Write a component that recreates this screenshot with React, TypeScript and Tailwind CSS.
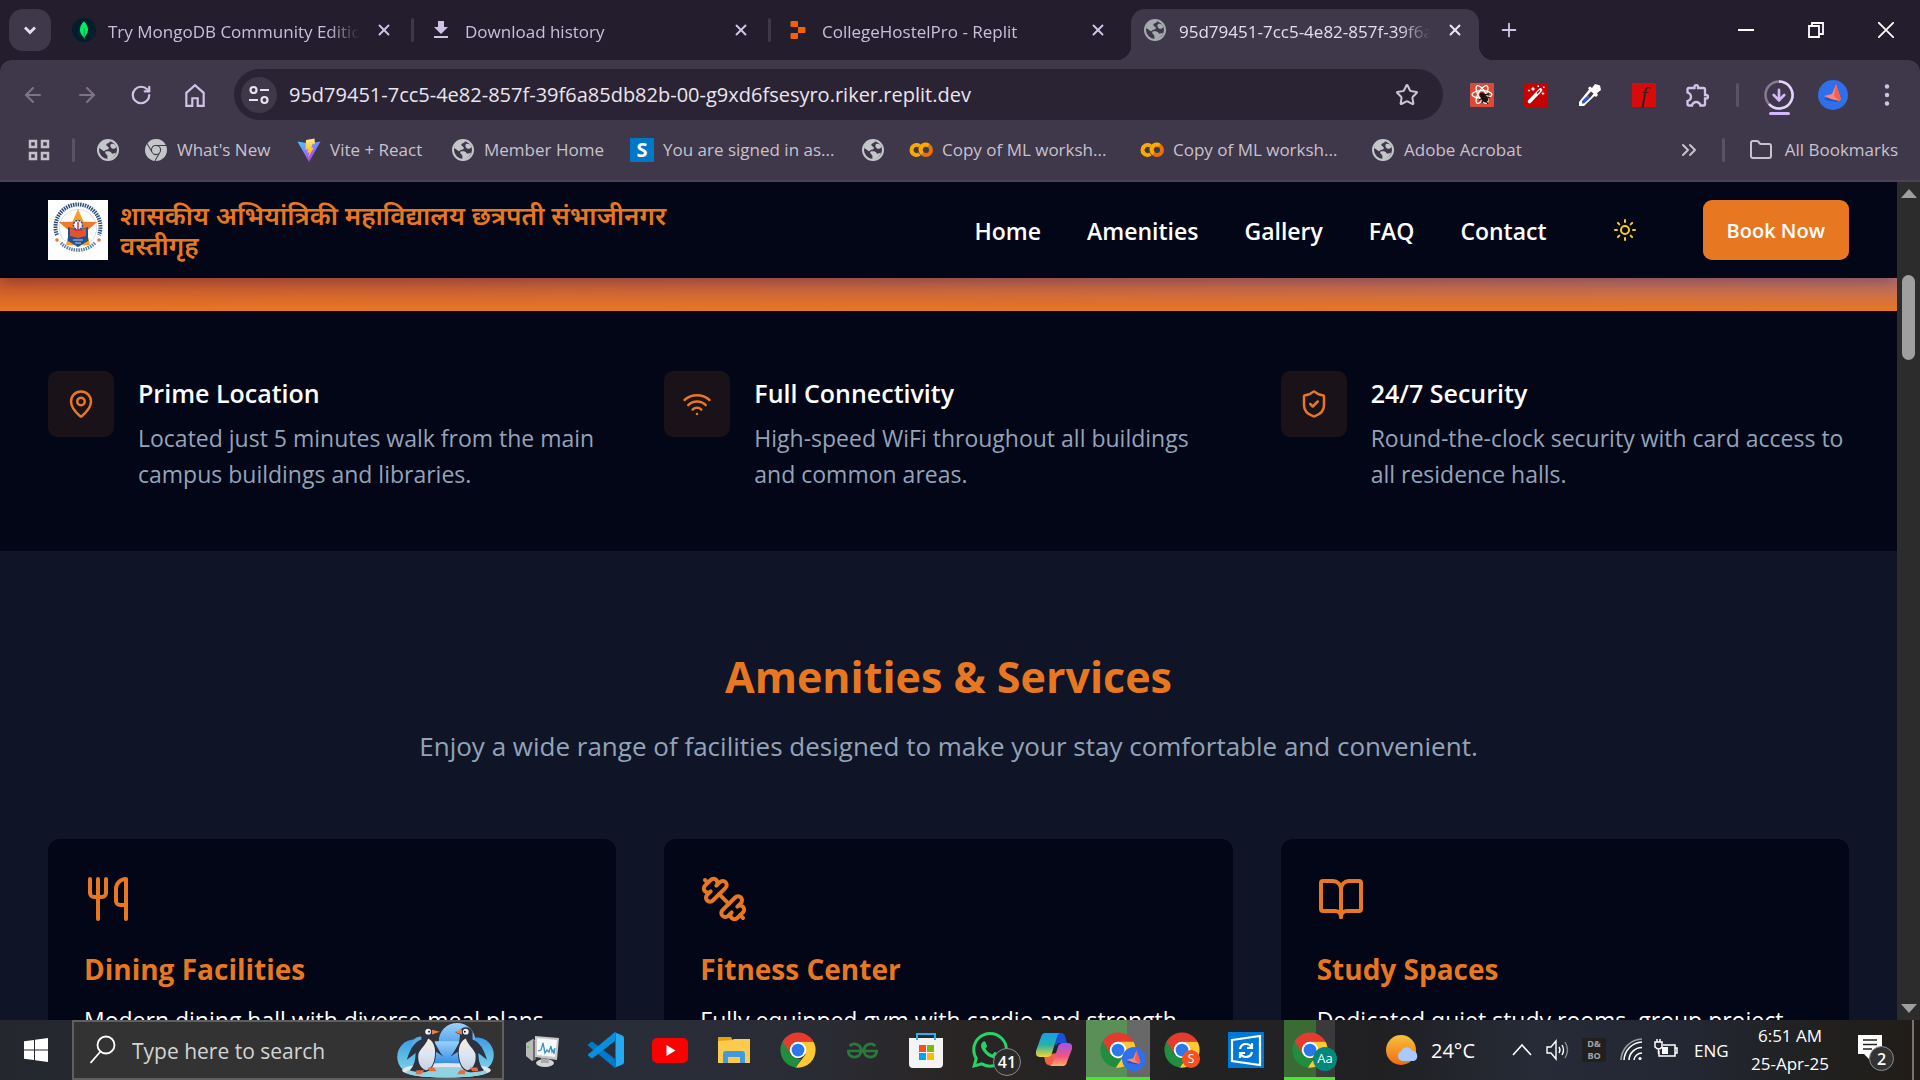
import React from "react";
import {
  ArrowDown, ArrowLeft, ArrowRight, BookOpen, ChevronsRight, Folder, MapPin, Plus,
  RotateCw, ShieldCheck, Star, Sun, Utensils, Wifi, X,
} from "lucide-react";
import { SiMongodb, SiGooglechrome, SiReplit, SiWhatsapp, SiGeeksforgeeks } from "react-icons/si";
import { MdDownload, MdOutlineExtension } from "react-icons/md";

type IconProps = { className?: string };

function Globe({ className = "size-6 text-[#c4c7c9]" }: IconProps) {
  return (
    <svg viewBox="0 0 24 24" className={className} aria-hidden="true">
      <circle cx="12" cy="12" r="10" fill="none" stroke="currentColor" strokeWidth="2" />
      <path fill="currentColor" d="M3 10C4 5 8 2 13 2.500c1.500.5 1 2-.5 2.500-2 .5-3 1.500-1.500 3 1.500 1 2.500 1.500 1.500 3-.8 1-3 .5-3.500 1.500-.8 1.500-2.500 0-3.500-1zM9.500 13.500c3-.5 5.500 0 6 1.500.5 1.300 2.500.5 4.500-.5-1 4-4.500 7-8.500 7-.5-2 .5-3-.5-4.500-1-1-2.500-2-1.500-3.500zM15 6c2-1 4.500 0 5.500 3-1.500 2.500-4.500 2-5.500.5-.8-1.200-.8-2.700 0-3.500z" />
    </svg>
  );
}

function ViteLogo() {
  return (
    <svg viewBox="0 0 24 24" className="size-6" aria-hidden="true">
      <defs>
        <linearGradient id="vite-a" x1="0" y1="0" x2=".6" y2="1"><stop stopColor="#41d1ff" /><stop offset="1" stopColor="#bd34fe" /></linearGradient>
        <linearGradient id="vite-b" x1="0" y1="0" x2="0" y2="1"><stop stopColor="#ffea83" /><stop offset="1" stopColor="#ffa800" /></linearGradient>
      </defs>
      <path fill="url(#vite-a)" d="M.5 3.500 12 5.500l11.500-2L12 24z" />
      <path fill="url(#vite-b)" d="m17.500.5-8.500 1.600-.6 9.600 2.600-.6-.8 3.900 2.200-.7-1.500 5.700 6-10.500-2.500.5L15.500 6l2.500-.5z" />
    </svg>
  );
}

function ColabLogo() {
  return (
    <svg viewBox="0 0 24 24" className="size-6" fill="none" strokeWidth="4" aria-hidden="true">
      <path stroke="#f9ab00" d="M10.500 8a5 5 0 1 0 0 8" />
      <circle cx="17" cy="12" r="5" stroke="#e8710a" />
      <path stroke="#f9ab00" d="M13.500 15.500a5 5 0 0 1 6-8" />
    </svg>
  );
}

function SBadge() {
  return <span className="flex size-6 items-center justify-center bg-[#0078c8] text-[20px] font-bold leading-6 text-white">S</span>;
}

function TuneIcon() {
  return (
    <svg viewBox="0 0 24 24" className="size-6" fill="none" stroke="currentColor" strokeWidth="2.200" aria-hidden="true">
      <circle cx="6.500" cy="7" r="3" /><path d="M13 7h9M2 17h9" /><circle cx="17.500" cy="17" r="3" />
    </svg>
  );
}

function HomeIcon() {
  return (
    <svg viewBox="0 0 24 24" className="size-[26px]" fill="none" stroke="currentColor" strokeWidth="2" aria-hidden="true">
      <path d="M4 10l8-7 8 7v12h-5.500v-7h-5v7H4z" />
    </svg>
  );
}

function AppsIcon() {
  return (
    <svg viewBox="0 0 24 24" className="size-6 text-[#c4c0c8]" fill="none" stroke="currentColor" strokeWidth="2.500" aria-hidden="true">
      <path d="M3 3h6v6H3zM15 3h6v6h-6zM3 15h6v6H3zM15 15h6v6h-6z" />
    </svg>
  );
}

function ReactDevIcon() {
  return (
    <svg viewBox="0 0 24 24" className="size-6" aria-hidden="true">
      <rect width="24" height="24" rx="1" fill="#d94a38" />
      <g fill="none" stroke="#fff" strokeWidth="1.300">
        <ellipse cx="12" cy="11.500" rx="10" ry="3.800" /><ellipse cx="12" cy="11.500" rx="10" ry="3.800" transform="rotate(60 12 11.500)" /><ellipse cx="12" cy="11.500" rx="10" ry="3.800" transform="rotate(120 12 11.500)" />
      </g>
      <circle cx="12" cy="12" r="2.500" fill="#1b1414" /><ellipse cx="14.500" cy="15.500" rx="3.200" ry="4" transform="rotate(-35 14.500 15.500)" fill="#1b1414" />
      <path fill="none" stroke="#1b1414" strokeWidth="1.300" d="M9 17l4-2-1 5M14 12l5-1M17 14l3 1M16 18l2 3" />
    </svg>
  );
}

function WandIcon() {
  return (
    <svg viewBox="0 0 24 24" className="size-6" aria-hidden="true">
      <rect width="24" height="24" rx="2" fill="#c60303" />
      <path stroke="#fff" strokeWidth="3.600" strokeLinecap="round" d="M5.500 18.500 16.500 7" /><path stroke="#c60303" strokeWidth="1.200" d="m13 10.500 3-3.200" />
      <path fill="#fff" d="M9 3.500l.8 1.700 1.700.8-1.700.8L9 8.500l-.8-1.700L6.500 6l1.700-.8zM5 6l.5 1 1 .5-1 .5-.5 1-.5-1-1-.5 1-.5zM19 8.500l.6 1.400 1.400.6-1.400.6-.6 1.400-.6-1.400-1.400-.6 1.400-.6zM13.500 2.500h1.500V4h-1.500zM19 3.500h1.500V5H19z" />
    </svg>
  );
}

function Eyedropper() {
  return (
    <svg viewBox="0 0 24 24" className="size-6" aria-hidden="true">
      <path fill="#fff" d="m1 19 10-12.500L10 5l2-1.500 2 1.500 3-4 5 1.500L23 7l-4 3 1 2-2 2-1.500-1L6 23H1z" />
      <path fill="#2f55c8" d="m4 18 5-5 3.500 1.500L6 20.500H4z" /><path fill="#3c354a" d="m9 13 4-4.500 2.500 2-3 4z" />
    </svg>
  );
}

function BirdAvatar({ className = "size-[30px]" }: IconProps) {
  return (
    <svg viewBox="0 0 30 30" className={className} aria-hidden="true">
      <circle cx="15" cy="15" r="15" fill="#2f6fea" />
      <path d="M18 4l5 14-4 4-11-2-2-1 8-4z" fill="#1c3e9e" opacity=".6" />
      <path d="M18 4 14 14 6 16l7 3 8 2 2-2z" fill="#ff8576" /><path d="m18 4-2 12 5 5 2-2z" fill="#f4604f" />
    </svg>
  );
}

function Chrome({ id, className = "size-9" }: { id: string; className?: string }) {
  return (
    <svg viewBox="0 0 48 48" className={className} aria-hidden="true">
      <defs><clipPath id={id}><circle cx="24" cy="24" r="23.500" /></clipPath></defs>
      <g clipPath={`url(#${id})`}>
        <path fill="#e33b2e" d="M0 0h48v13H24L14 29 0 12z" />
        <path fill="#fcc934" d="M24 13h24v35H20l14-18z" />
        <path fill="#1f8e3e" d="M3.500 12 14 30l10 6 4 0-7 12H0V12z" />
      </g>
      <circle cx="24" cy="24" r="11" fill="#fff" /><circle cx="24" cy="24" r="8.500" fill="#2b78ec" />
    </svg>
  );
}

function Emblem() {
  return (
    <svg viewBox="0 0 60 60" className="size-[60px] shrink-0 bg-white" role="img" aria-label="College emblem">
      <path fill="none" stroke="#2e4f80" strokeWidth="4" strokeDasharray="1.500 .9" d="M9 35A22.500 22.500 0 1 1 51 35" />
      <path fill="none" stroke="#5d7ea8" strokeWidth="3.500" strokeDasharray="1.500 .9" d="M13 43A24 24 0 0 0 47 43" />
      <circle cx="30" cy="28" r="18.500" fill="none" stroke="#d5deea" />
      <circle cx="9" cy="40" r="1.800" fill="#e8772e" /><circle cx="51" cy="40" r="1.800" fill="#e8772e" />
      <path fill="#f6a02c" d="m30 9 5.500 12.500L49 22 38.500 31 42 45H18l3.500-14L11 22l13.500-.5z" />
      <path fill="#ee7a2b" d="M11 22h38L38.500 31 41 41H19l2.500-10z" />
      <path fill="#24508f" d="M20 27l10 3 10-3v14l-10 6-10-6z" /><path fill="#e2542c" d="M22 28l8 3 8-3v8l-8 2-8-2z" />
      <circle cx="30" cy="25" r="4.500" fill="#fff" stroke="#24508f" strokeWidth="1.500" strokeDasharray="2 1" /><path d="M30 22v8M26 30h8" stroke="#dd3333" strokeWidth="1.500" />
      <path d="M25 40h10M27 43h6" stroke="#bcd0ea" />
    </svg>
  );
}

function Dumbbell() {
  return (
    <svg viewBox="0 0 24 24" className="size-12" fill="none" stroke="currentColor" strokeWidth="2" strokeLinecap="round" strokeLinejoin="round" aria-hidden="true">
      <path d="M14.400 14.400 9.600 9.600" />
      <path d="M18.657 21.485a2 2 0 1 1-2.829-2.828l-1.767 1.768a2 2 0 1 1-2.829-2.829l6.364-6.364a2 2 0 1 1 2.829 2.829l-1.768 1.767a2 2 0 1 1 2.828 2.829z" />
      <path d="m21.500 21.500-1.400-1.400M3.900 3.900 2.500 2.500" />
      <path d="M6.404 12.768a2 2 0 1 1-2.829-2.829l1.768-1.767a2 2 0 1 1-2.828-2.829l2.828-2.828a2 2 0 1 1 2.829 2.828l1.767-1.768a2 2 0 1 1 2.829 2.829z" />
    </svg>
  );
}

function Penguins() {
  return (
    <svg viewBox="0 0 100 58" className="h-[56px] w-[99px]" aria-hidden="true">
      <defs>
        <linearGradient id="sky" x1="0" y1="0" x2="0" y2="1"><stop stopColor="#9bd0fa" /><stop offset="1" stopColor="#1e7fe0" /></linearGradient>
        <linearGradient id="cloud" x1="0" y1="0" x2="0" y2="1"><stop stopColor="#3d9de6" /><stop offset="1" stopColor="#7fd8e6" /></linearGradient>
        <linearGradient id="belly" x1="0" y1="0" x2="0" y2="1"><stop stopColor="#f6ecd8" /><stop offset=".5" stopColor="#dde6f4" /><stop offset="1" stopColor="#c3cfe4" /></linearGradient>
      </defs>
      <circle cx="18" cy="36" r="18" fill="url(#cloud)" /><circle cx="82" cy="34" r="18" fill="url(#cloud)" />
      <circle cx="24" cy="24" r="9" fill="#55aeea" /><circle cx="62" cy="20" r="19" fill="url(#sky)" /><path fill="url(#sky)" d="M36 20h36v28H36z" />
      <ellipse cx="51" cy="50" rx="46" ry="7.500" fill="#e6e4f0" /><ellipse cx="51" cy="52" rx="42" ry="5.500" fill="#8fd3e2" />
      <g>
        <path fill="#2b3240" d="M25 11c1-6 10-8 13-2l5 2-5 2c0 6 3 14 2 22-1 9-5 17-12 17-8 0-13-1-15-2 5-5 6-12 6-18l-9 7c3-10 7-18 15-21z" />
        <path fill="#2b3240" d="M37 19c4 5 6 12 11 17l-9-6z" />
        <path fill="url(#belly)" d="M32 17c6 3 8 10 7 18-1 10-5 14-9 15-7-2-9-10-8-17 2-6 7-8 10-16z" />
        <circle cx="32" cy="10" r="3" fill="#eef2f8" /><circle cx="33" cy="10" r="1" fill="#111" /><path fill="#f08040" d="m36 8 8 2-8 3z" />
        <path fill="#ea6a38" d="M20 50h8l-3 4h-6zM32 47h6l3 4h-8z" />
      </g>
      <g transform="translate(103 0) scale(-1 1)">
        <path fill="#2b3240" d="M25 11c1-6 10-8 13-2l5 2-5 2c0 6 3 14 2 22-1 9-5 17-12 17-8 0-13-1-15-2 5-5 6-12 6-18l-9 7c3-10 7-18 15-21z" />
        <path fill="#2b3240" d="M37 19c4 5 6 12 11 17l-9-6z" />
        <path fill="url(#belly)" d="M32 17c6 3 8 10 7 18-1 10-5 14-9 15-7-2-9-10-8-17 2-6 7-8 10-16z" />
        <circle cx="32" cy="10" r="3" fill="#eef2f8" /><circle cx="33" cy="10" r="1" fill="#111" /><path fill="#f08040" d="m36 8 8 2-8 3z" />
        <path fill="#ea6a38" d="M20 47h8l-3 4h-6zM32 50h6l3 4h-8z" />
      </g>
    </svg>
  );
}

function MonitorApp() {
  return (
    <svg viewBox="0 0 36 36" className="size-9" aria-hidden="true">
      <path fill="#b9b9b9" d="m2 11 7-4 3 2v18l-4 2-6-5z" /><path fill="#6c6c6c" d="m9 8 3 1v18l-3 1z" /><circle cx="4" cy="15" r="1.200" fill="#57d931" />
      <ellipse cx="21" cy="31" rx="9" ry="4" fill="#d4d4d4" /><path fill="#a8a8a8" d="m17 26 8 1v4h-8z" />
      <path fill="#c7c7c7" d="m11 4 24 2-2 22-22-3z" /><path fill="#f4f9fc" d="m13 6 20 2-2 17-18-2z" />
      <path fill="none" stroke="#3d93bd" strokeWidth="1.300" d="m14 19 3-1 2-7 2 10 2-3 2 2 2-6 1 6 1-2 1 4 1-6" />
    </svg>
  );
}

function VSCode() {
  return (
    <svg viewBox="0 0 36 36" className="size-9" aria-hidden="true">
      <path fill="#0179cb" d="M0 12.500 3 10q1-.7 2 0l22 17v9L.5 14q-.8-.8-.5-1.500z" />
      <path fill="#0a8ede" d="M0 23.500 3 26q1 .7 2 0L27 9V0L.5 22q-.8.8-.5 1.500z" />
      <path fill="#27a9f2" d="m26 0 8.500 3.500q1.500.8 1.500 2.500v24q0 1.700-1.500 2.500L26 36q1.500-.5 1.500-2V2Q27.500.5 26 0z" />
    </svg>
  );
}

function YouTube() {
  return (
    <svg viewBox="0 0 36 36" className="size-9" aria-hidden="true">
      <rect y="6" width="36" height="25" rx="5" fill="#fd0000" /><path fill="#fff" d="m14.500 13 9 5.500-9 5.500z" />
    </svg>
  );
}

function Explorer() {
  return (
    <svg viewBox="0 0 36 36" className="size-9" aria-hidden="true">
      <path fill="#e5a10c" d="M2 5h13l2 4H2z" /><path fill="#fccb4e" d="M2 9l14-1 2-1h16v24H2z" />
      <path fill="#3f9ae2" d="M10 19h16q3 0 3 3v9h-5v-6H12v6H7v-9q0-3 3-3z" />
    </svg>
  );
}

function Store() {
  return (
    <svg viewBox="0 0 36 36" className="size-9" aria-hidden="true">
      <path fill="#f4f4f4" d="M1 6h34v26q0 4-4 4H5q-4 0-4-4z" /><path fill="none" stroke="#22b4ea" strokeWidth="2" d="M9 8V2h18v6" />
      <path fill="#f25022" d="M11 13h7v7h-7z" /><path fill="#7fba00" d="M19 13h7v7h-7z" /><path fill="#00a4ef" d="M11 21h7v7h-7z" /><path fill="#ffb900" d="M19 21h7v7h-7z" />
    </svg>
  );
}

function Copilot() {
  return (
    <svg viewBox="0 0 36 36" className="size-9" aria-hidden="true">
      <defs>
        <linearGradient id="cop-a" x1="0" y1="0" x2="0" y2="1"><stop stopColor="#129ff0" /><stop offset=".5" stopColor="#28b3a5" /><stop offset="1" stopColor="#f5d435" /></linearGradient>
        <linearGradient id="cop-b" x1="0" y1="0" x2="0" y2="1"><stop stopColor="#a552ee" /><stop offset=".6" stopColor="#f2567c" /><stop offset="1" stopColor="#ffb067" /></linearGradient>
      </defs>
      <path fill="#1b4fd6" d="M16 1h9q3 0 4 3l2 7h-7q-3 0-4 3z" /><path fill="#f2604a" d="m8 24 7-2 6-1-3 12H13q-3 0-4-4z" />
      <path fill="url(#cop-a)" d="M9 1h16q-3 0-4 4l-5 16q-1 4-5 4H4q-5 0-4-6L5 5q1-4 4-4z" />
      <path fill="url(#cop-b)" d="M27 34H12q4 0 5-4l5-15q1-4 5-4h5q5 0 4 6l-5 13q-1 4-4 4z" />
    </svg>
  );
}

function SyncApp() {
  return (
    <svg viewBox="0 0 36 36" className="size-9" aria-hidden="true">
      <path fill="#0078d7" d="M0 0h36v36H0z" />
      <path fill="none" stroke="#fff" strokeWidth="2.200" d="M4 8l28-4v29L4 29z" />
      <path fill="none" stroke="#fff" strokeWidth="2.200" d="M12 17q1-5 6-5 4 0 6 4M24 11v5h-5M24 20q-1 5-6 5-4 0-6-4M12 26v-5h5" />
    </svg>
  );
}

const tabs = [
  { title: "Try MongoDB Community Edition", icon: <span className="flex size-6 items-center justify-center rounded-full bg-[#021e2b]"><SiMongodb className="size-[18px] text-[#00ed64]" /></span> },
  { title: "Download history", icon: <MdDownload className="size-6 text-[#cfc4e6]" /> },
  { title: "CollegeHostelPro - Replit", icon: <SiReplit className="size-[18px] text-[#f26207]" /> },
];

function TabBody({ title, icon, active }: { title: string; icon: React.ReactNode; active?: boolean }) {
  return (
    <>
      <span className="flex size-6 shrink-0 items-center justify-center">{icon}</span>
      <span className="ml-3 min-w-0 flex-1 overflow-hidden whitespace-nowrap pt-[3px] [mask-image:linear-gradient(to_right,black_calc(100%-32px),transparent)]">{title}</span>
      <button aria-label={`Close ${title}`} className={active ? "ml-3 flex size-6 shrink-0 items-center justify-center text-[#ece6f2]" : "ml-3 flex size-6 shrink-0 items-center justify-center text-[#cfc4e6]"}><X className="size-[18px]" strokeWidth={2.500} /></button>
    </>
  );
}

function TabStrip() {
  return (
    <div className="flex h-[60px] items-stretch bg-[#241d2e] text-[17px] text-[#c9bfdc]">
      <div className="flex w-14 shrink-0 items-center pl-[9px]">
        <button aria-label="Search tabs" className="flex size-[42px] items-center justify-center rounded-[14px] bg-[#3f374a] text-[#e6deef]">
          <svg viewBox="0 0 24 24" className="size-6" fill="none" stroke="currentColor" strokeWidth="2.800" aria-hidden="true"><path d="m7 9.500 5 5 5-5" /></svg>
        </button>
      </div>
      {tabs.map((t, i) => (
        <div key={t.title} className="relative flex w-[357px] min-w-0 shrink items-center pl-4 pr-[17px]">
          <TabBody {...t} />
          {i < 2 && <span className="absolute -right-px top-[18px] h-6 w-[3px] rounded bg-[#3f374a]" />}
        </div>
      ))}
      <div className="relative ml-1 mt-[9px] flex w-[348px] min-w-0 shrink items-center rounded-t-[14px] bg-[#3f374a] px-3 pb-[9px] text-[#e4deec]">
        <span className="absolute -left-[14px] bottom-0 size-[14px] bg-[radial-gradient(circle_at_0_0,transparent_14px,#3f374a_14px)]" />
        <TabBody title="95d79451-7cc5-4e82-857f-39f6a85db82b-00" icon={<Globe className="size-6 text-[#a6abaf]" />} active />
        <span className="absolute -right-[14px] bottom-0 size-[14px] bg-[radial-gradient(circle_at_100%_0,transparent_14px,#3f374a_14px)]" />
      </div>
      <button aria-label="New tab" className="ml-[18px] flex w-6 items-center justify-center text-[#cfc4e6]"><Plus className="size-[22px]" /></button>
      <div className="ml-auto flex text-white">
        <button aria-label="Minimize" className="flex w-[70px] items-center justify-center"><span className="h-[2px] w-4 bg-white" /></button>
        <button aria-label="Restore" className="flex w-[70px] items-center justify-center">
          <svg viewBox="0 0 16 16" className="size-4" fill="none" stroke="currentColor" strokeWidth="1.800" aria-hidden="true"><path d="M1 4h10v11H1zM4 4V1h11v11h-4" /></svg>
        </button>
        <button aria-label="Close window" className="flex w-[69px] items-center justify-center">
          <svg viewBox="0 0 16 16" className="size-4" fill="none" stroke="currentColor" strokeWidth="1.800" aria-hidden="true"><path d="m0 0 16 16M16 0 0 16" /></svg>
        </button>
      </div>
    </div>
  );
}

const slot = "flex w-[54px] shrink-0 items-center justify-center";

function Toolbar() {
  return (
    <div className="flex h-[69px] items-center rounded-t-xl bg-[#3f374a] px-[6px] text-[#cfc4e6]">
      <button aria-label="Back" className={`${slot} text-[#7d748a]`}><ArrowLeft className="size-6" /></button>
      <button aria-label="Forward" className={`${slot} text-[#7d748a]`}><ArrowRight className="size-6" /></button>
      <button aria-label="Reload" className={slot}><RotateCw className="size-[22px]" strokeWidth={2.400} /></button>
      <button aria-label="Home" className={slot}><HomeIcon /></button>
      <div className="ml-3 flex h-[51px] min-w-0 flex-1 items-center rounded-full bg-[#2a2333] pl-[7px] pr-6">
        <button aria-label="Site information" className="flex size-9 shrink-0 items-center justify-center rounded-full bg-[#3f374a] text-[#e8e2ee]"><TuneIcon /></button>
        <input aria-label="Address" readOnly value="95d79451-7cc5-4e82-857f-39f6a85db82b-00-g9xd6fsesyro.riker.replit.dev" className="ml-3 min-w-0 flex-1 bg-transparent text-[20px] text-[#ebe5f0] outline-none" />
        <button aria-label="Bookmark this page" className="text-[#cdc6d4]"><Star className="size-6" /></button>
      </div>
      <button aria-label="React Developer Tools" className={`${slot} ml-3`}><ReactDevIcon /></button>
      <button aria-label="Magic wand" className={slot}><WandIcon /></button>
      <button aria-label="Color picker" className={slot}><Eyedropper /></button>
      <button aria-label="Font finder" className={slot}><span className="flex size-6 items-center justify-center bg-[#d80a0a] font-['Liberation_Serif',serif] text-[24px] italic leading-5 text-[#3a2028]">f</span></button>
      <button aria-label="Extensions" className={slot}><MdOutlineExtension className="size-7" /></button>
      <span className="ml-[11px] h-6 w-[3px] shrink-0 rounded bg-[#5a5266]" />
      <button aria-label="Downloads" className="relative ml-[13px] flex w-[54px] shrink-0 items-center justify-center text-[#d3b8ff]">
        <svg viewBox="0 0 30 30" className="size-[30px]" fill="none" strokeWidth="2.500" aria-hidden="true">
          <circle cx="15" cy="15" r="13.500" stroke="#857c90" /><path stroke="#e6d3ff" d="M15 1.500a13.500 13.500 0 1 1-10 22.500" />
        </svg>
        <ArrowDown className="absolute size-[18px]" strokeWidth={3.500} />
        <span className="absolute -bottom-[5px] h-[3px] w-[21px] rounded bg-[#d3b8ff]" />
      </button>
      <button aria-label="Profile" className={slot}><BirdAvatar /></button>
      <button aria-label="Browser menu" className={slot}>
        <svg viewBox="0 0 24 24" className="size-6" fill="currentColor" aria-hidden="true"><circle cx="12" cy="3.500" r="2.200" /><circle cx="12" cy="12" r="2.200" /><circle cx="12" cy="20.500" r="2.200" /></svg>
      </button>
    </div>
  );
}

const bookmarks = [
  { width: "w-12", icon: <Globe />, label: "" },
  { width: "w-[153px]", icon: <SiGooglechrome className="size-[22px] text-[#c4c7c9]" />, label: "What's New" },
  { width: "w-[154px]", icon: <ViteLogo />, label: "Vite + React" },
  { width: "w-[179px]", icon: <Globe />, label: "Member Home" },
  { width: "w-[231px]", icon: <SBadge />, label: "You are signed in as..." },
  { width: "w-12", icon: <Globe />, label: "" },
  { width: "w-[231px]", icon: <ColabLogo />, label: "Copy of ML worksh..." },
  { width: "w-[231px]", icon: <ColabLogo />, label: "Copy of ML worksh..." },
  { width: "w-[160px]", icon: <Globe />, label: "Adobe Acrobat" },
];

function BookmarksBar() {
  return (
    <nav aria-label="Bookmarks" className="flex h-[53px] items-center border-b-2 border-[#4a4355] bg-[#3f374a] pb-[10px] pl-[27px] pr-[22px] text-[17px] text-[#c8c2ce]">
      <button aria-label="Apps"><AppsIcon /></button>
      <span className="mx-[21px] h-6 w-[3px] rounded bg-[#5a5266]" />
      {bookmarks.map((b, i) => (
        <a key={i} href="#" aria-label={b.label || "Bookmark"} className={`${b.width} flex shrink-0 items-center gap-[9px] whitespace-nowrap`}>
          <span className="flex size-6 shrink-0 items-center justify-center">{b.icon}</span>
          {b.label}
        </a>
      ))}
      <button aria-label="More bookmarks" className="ml-auto"><ChevronsRight className="size-6" /></button>
      <span className="ml-[21px] mr-6 h-6 w-[3px] rounded bg-[#5a5266]" />
      <button className="flex items-center gap-3"><Folder className="size-6" />All Bookmarks</button>
    </nav>
  );
}

const navItems = ["Home", "Amenities", "Gallery", "FAQ", "Contact"];

function SiteHeader() {
  return (
    <header className="relative z-10 flex h-24 items-center justify-between bg-[#020617] px-12 shadow-[0_8px_12px_-4px_rgba(20,20,45,0.25)]">
      <a href="#" className="flex items-center gap-3">
        <Emblem />
        <span className="w-[600px] font-['Noto_Sans',sans-serif] text-[26px] font-semibold leading-[30px] text-[#e87722]">शासकीय अभियांत्रिकी महाविद्यालय छत्रपती संभाजीनगर वस्तीगृह</span>
      </a>
      <div className="flex items-center">
        <nav aria-label="Main" className="flex gap-[46px] pt-[2px] text-[23px] font-semibold text-white">
          {navItems.map((n) => <a key={n} href="#">{n}</a>)}
        </nav>
        <button aria-label="Toggle theme" className="ml-[66px] text-[#facc15]"><Sun className="size-6" /></button>
        <button className="ml-[66px] h-[60px] rounded-[9px] bg-[#e87722] px-6 pt-[2px] text-[20px] font-semibold text-white">Book Now</button>
      </div>
    </header>
  );
}

const features = [
  { icon: <MapPin className="size-[30px]" />, title: "Prime Location", text: "Located just 5 minutes walk from the main campus buildings and libraries." },
  { icon: <Wifi className="size-[30px]" />, title: "Full Connectivity", text: "High-speed WiFi throughout all buildings and common areas." },
  { icon: <ShieldCheck className="size-[30px]" />, title: "24/7 Security", text: "Round-the-clock security with card access to all residence halls." },
];

const amenities = [
  { icon: <Utensils className="size-12" />, title: "Dining Facilities", text: "Modern dining hall with diverse meal plans" },
  { icon: <Dumbbell />, title: "Fitness Center", text: "Fully equipped gym with cardio and strength" },
  { icon: <BookOpen className="size-12" />, title: "Study Spaces", text: "Dedicated quiet study rooms, group project" },
];

function Site() {
  return (
    <div className="min-w-0 flex-1 overflow-hidden bg-[#0f1526]">
      <SiteHeader />
      <div className="h-[33px] bg-[linear-gradient(to_top,#e87722,transparent),linear-gradient(to_right,#c2502e,#b06a70)]" />
      <section className="grid grid-cols-3 gap-12 bg-[#020617] px-12 pb-[59px] pt-[60px]">
        {features.map((f) => (
          <div key={f.title} className="flex items-start gap-6">
            <span className="flex size-[66px] shrink-0 items-center justify-center rounded-[9px] bg-[#191218] text-[#e87722]">{f.icon}</span>
            <div className="pt-1">
              <h3 className="mb-[9px] text-[25px] font-semibold leading-9 text-white">{f.title}</h3>
              <p className="text-[23px] leading-9 text-[#94a3b8]">{f.text}</p>
            </div>
          </div>
        ))}
      </section>
      <section className="px-12 pt-24">
        <h2 className="text-center text-[43px] font-bold leading-[60px] text-[#e87722]">Amenities &amp; Services</h2>
        <p className="mt-[18px] text-center text-[26px] leading-[42px] text-[#94a3b8]">Enjoy a wide range of facilities designed to make your stay comfortable and convenient.</p>
        <div className="mt-[72px] grid grid-cols-3 gap-12">
          {amenities.map((a) => (
            <article key={a.title} className="rounded-xl bg-[#020617] p-9 text-[#e87722]">
              {a.icon}
              <h3 className="mt-[25px] text-[28px] font-bold leading-[42px]">{a.title}</h3>
              <p className="mt-3 text-[23px] leading-9 text-white">{a.text}</p>
            </article>
          ))}
        </div>
      </section>
    </div>
  );
}

function Scrollbar() {
  return (
    <div className="flex w-[23px] shrink-0 flex-col items-center bg-[#2c2c2c] py-[7px]" aria-hidden="true">
      <span className="border-x-[8px] border-b-[9px] border-x-transparent border-b-[#9f9f9f]" />
      <span className="mt-[77px] h-[85px] w-[13px] rounded-full bg-[#9f9f9f]" />
      <span className="mt-auto border-x-[8px] border-t-[9px] border-x-transparent border-t-[#9f9f9f]" />
    </div>
  );
}

const taskApps = [
  { name: "Performance monitor", icon: <MonitorApp />, cell: "" },
  { name: "Visual Studio Code", icon: <VSCode />, cell: "" },
  { name: "YouTube", icon: <YouTube />, cell: "" },
  { name: "File Explorer", icon: <Explorer />, cell: "" },
  { name: "Chrome", icon: <Chrome id="chrome-a" />, cell: "" },
  { name: "GeeksforGeeks", icon: <SiGeeksforgeeks className="size-[31px] text-[#2a7a3e]" />, cell: "" },
  { name: "Microsoft Store", icon: <Store />, cell: "" },
  { name: "WhatsApp", icon: <SiWhatsapp className="size-9 text-[#25d366]" />, cell: "", badge: <span className="absolute left-[35px] top-[28px] flex size-7 items-center justify-center rounded-full border border-[#8c8c8c] bg-[#2b2b2b] text-[16px] font-semibold text-white">41</span> },
  { name: "Copilot", icon: <Copilot />, cell: "" },
  { name: "Chrome profile 1", icon: <Chrome id="chrome-b" />, cell: "border-b-[3px] border-[#4be52f] bg-[linear-gradient(to_right,#5b8f58_64%,#686868_64%)] pt-[3px]", badge: <BirdAvatar className="absolute left-[36px] top-[27px] size-6" /> },
  { name: "Chrome profile 2", icon: <Chrome id="chrome-c" />, cell: "", badge: <span className="absolute left-[32px] top-[30px] flex size-[18px] items-center justify-center rounded-full bg-[#f4511e] text-[12px] text-white">S</span> },
  { name: "Sync", icon: <SyncApp />, cell: "" },
  { name: "Chrome profile 3", icon: <Chrome id="chrome-d" />, cell: "bg-[linear-gradient(to_right,transparent_6px,#3a6b35_6px_38px,#3a3a3a_38px_57px,transparent_57px)]", badge: <><span className="absolute left-[35px] top-[27px] flex size-6 items-center justify-center rounded-full bg-[#00897b] text-[13px] text-white">Aa</span><span className="absolute bottom-0 left-[6px] h-[3px] w-[51px] bg-[#4be52f]" /></> },
];

function Taskbar() {
  return (
    <footer className="flex h-[60px] shrink-0 items-stretch bg-[linear-gradient(to_right,#24272e,#292d38_34%,#2a2c35_42%,#292524_50%,#232323_60%,#202023_72%,#262b37_80%,#232733_88%,#20201f_95%,#211c18)] text-white">
      <button aria-label="Start" className="flex w-[72px] items-center justify-center">
        <svg viewBox="0 0 24 24" className="size-6" fill="currentColor" aria-hidden="true"><path d="M0 3.300 10 2v9.500H0zM11 1.800 24 0v11.500H11zM0 12.500h10V22L0 20.700zM11 12.500h13V24l-13-1.800z" /></svg>
      </button>
      <label className="flex w-[432px] items-center border-2 border-[#5f5f5f] bg-[#333333] pl-4 pr-[7px]">
        <svg viewBox="0 0 26 30" className="h-[30px] w-[26px]" fill="none" stroke="currentColor" strokeWidth="1.800" aria-hidden="true"><circle cx="16" cy="10" r="8.500" /><path d="M10.500 16.500.5 28" /></svg>
        <input placeholder="Type here to search" aria-label="Type here to search" className="ml-4 min-w-0 flex-1 bg-transparent pt-[3px] text-[21px] text-white outline-none placeholder:text-[#d4d4d4]" />
        <Penguins />
      </label>
      <div className="ml-[6px] flex">
        {taskApps.map((a) => (
          <button key={a.name} aria-label={a.name} className={`relative flex w-16 items-center justify-center ${a.cell}`}>
            {a.icon}
            {a.badge}
          </button>
        ))}
      </div>
      <div className="ml-auto flex items-center text-[19px]">
        <svg viewBox="0 0 36 36" className="size-9" aria-hidden="true">
          <defs><linearGradient id="sun" x1="0" y1="0" x2="0" y2="1"><stop stopColor="#f9c13c" /><stop offset="1" stopColor="#ef6c12" /></linearGradient></defs>
          <circle cx="17" cy="18" r="15" fill="url(#sun)" /><path fill="#a9c8fb" d="M18 29a5 5 0 0 1-1-9.500 6 6 0 0 1 11-1 5.500 5.500 0 0 1 2 10.500z" />
        </svg>
        <span className="ml-[11px] w-[45px] whitespace-nowrap pt-[2px] text-[20px]">24°C</span>
        <svg viewBox="0 0 20 20" className="ml-9 size-5" fill="none" stroke="currentColor" strokeWidth="1.600" aria-hidden="true"><path d="m1 15 9-10 9 10" /></svg>
        <svg viewBox="0 0 24 24" className="ml-[14px] size-6" fill="none" stroke="currentColor" strokeWidth="1.400" aria-hidden="true"><path d="M1 9h4l5-6v18l-5-6H1zM13 9q2 3 0 6M16 7q3 5 0 10" /><path stroke="#8c8c8c" d="M19 4q5 8 0 16" /></svg>
        <span className="ml-3 flex size-6 flex-col items-center justify-center bg-[#221f1f] text-[9px] font-bold leading-[12px] text-[#a5a5a5]"><span>D&amp;</span><span>BO</span></span>
        <svg viewBox="0 0 24 24" className="ml-[14px] size-6" fill="none" stroke="currentColor" strokeWidth="1.600" aria-hidden="true"><path d="M4 22A19 19 0 0 1 22 4M9 22A13 13 0 0 1 22 9.500M14 22a8 8 0 0 1 8-7" /><path stroke="#9a9a9a" d="M1 22A22 22 0 0 1 22 1" /><circle cx="20" cy="20.500" r="1.600" fill="currentColor" stroke="none" /></svg>
        <svg viewBox="0 0 24 24" className="ml-[10px] size-6" fill="none" stroke="currentColor" strokeWidth="1.500" aria-hidden="true"><path d="M9 7h12v11H5v-5M21 10h2v5h-2M1 4h7v5q-3 4-7 0zM3 4V1M6 4V1M4.500 11v5" /><path fill="currentColor" stroke="none" d="M8 9h6v7H8z" /></svg>
        <span className="ml-4 w-[40px] pt-[2px] text-[17px]">ENG</span>
        <span className="ml-[6px] flex w-[100px] flex-col items-center whitespace-nowrap text-[17px] leading-7"><span>6:51 AM</span><span>25-Apr-25</span></span>
        <button aria-label="Notifications" className="relative ml-[18px] flex w-[42px] items-center">
          <svg viewBox="0 0 24 30" className="h-[30px] w-6" aria-hidden="true"><path fill="#fff" d="M0 0h24v19H13l-2 5-5-5H0z" /><path stroke="#222" strokeWidth="1.500" d="M5 5h14M5 9.500h14M5 14h9" /></svg>
          <span className="absolute left-[11px] top-[11px] flex size-[25px] items-center justify-center rounded-full border border-[#8c8c8c] bg-[#333333] text-[16px] font-semibold">2</span>
        </button>
        <span className="ml-3 mr-[6px] h-[60px] w-[2px] bg-[#77736f]" />
      </div>
    </footer>
  );
}

export default function App() {
  return (
    <div className="flex h-screen flex-col overflow-hidden bg-[#241d2e] font-['Open_Sans','Noto_Sans',sans-serif]">
      <TabStrip />
      <Toolbar />
      <BookmarksBar />
      <main className="flex min-h-0 flex-1">
        <Site />
        <Scrollbar />
      </main>
      <Taskbar />
    </div>
  );
}
